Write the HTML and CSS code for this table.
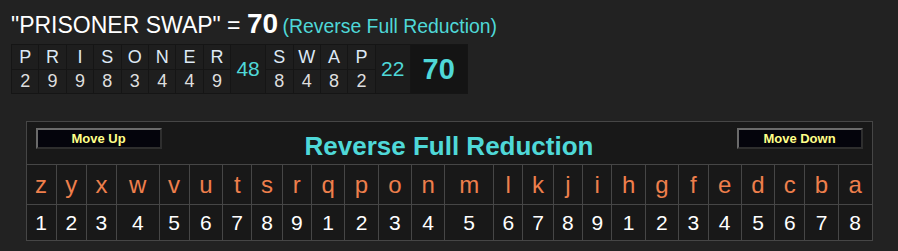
FILE: index.html
```html
<!DOCTYPE html>
<html>
<head>
<meta charset="utf-8">
<link rel="stylesheet" href="styles.css">
</head>
<body>
<div class="headline">
  <span class="phrase">"PRISONER SWAP" = </span><span class="val">70</span> <span class="cipher">(Reverse Full Reduction)</span>
</div>
<table class="word">
  <tr>
    <td class="l">P</td><td class="l">R</td><td class="l">I</td><td class="l">S</td><td class="l">O</td><td class="l">N</td><td class="l">E</td><td class="l">R</td>
    <td class="sum" rowspan="2">48</td>
    <td class="l">S</td><td class="l">W</td><td class="l">A</td><td class="l">P</td>
    <td class="sum" rowspan="2">22</td>
    <td class="total" rowspan="2">70</td>
  </tr>
  <tr>
    <td class="n">2</td><td class="n">9</td><td class="n">9</td><td class="n">8</td><td class="n">3</td><td class="n">4</td><td class="n">4</td><td class="n">9</td>
    <td class="n">8</td><td class="n">4</td><td class="n">8</td><td class="n">2</td>
  </tr>
</table>
<div class="panelwrap">
<table class="chart">
  <tr>
    <td class="head" colspan="26">
      <div class="headbar">
        <button class="btn">Move Up</button>
        <span class="title">Reverse Full Reduction</span>
        <button class="btn">Move Down</button>
      </div>
    </td>
  </tr>
  <tr class="letters">
    <td>z</td><td>y</td><td>x</td><td>w</td><td>v</td><td>u</td><td>t</td><td>s</td><td>r</td><td>q</td><td>p</td><td>o</td><td>n</td><td>m</td><td>l</td><td>k</td><td>j</td><td>i</td><td>h</td><td>g</td><td>f</td><td>e</td><td>d</td><td>c</td><td>b</td><td>a</td>
  </tr>
  <tr class="nums">
    <td>1</td><td>2</td><td>3</td><td>4</td><td>5</td><td>6</td><td>7</td><td>8</td><td>9</td><td>1</td><td>2</td><td>3</td><td>4</td><td>5</td><td>6</td><td>7</td><td>8</td><td>9</td><td>1</td><td>2</td><td>3</td><td>4</td><td>5</td><td>6</td><td>7</td><td>8</td>
  </tr>
</table>
</div>
</body>
</html>
```
FILE: styles.css
```css
html, body {
  margin: 0;
  padding: 0;
  background: #222222;
  font-family: "Liberation Sans", Arial, sans-serif;
}

.headline {
  padding: 8px 0 0 11px;
  height: 28px;
  color: #ffffff;
  white-space: nowrap;
}

.phrase {
  font-size: 23px;
}

.val {
  font-size: 28px;
  font-weight: bold;
}

.cipher {
  font-size: 19.4px;
  color: #4fd8d8;
}

.word {
  margin: 8px 0 0 11px;
  border-collapse: separate;
  border-spacing: 1px;
  background: #151515;
}

.word td {
  padding: 0;
  text-align: center;
}

.word .l {
  width: 26.4px;
  height: 24px;
  background: #1e1e1e;
  color: #dde9f5;
  font-size: 18px;
}

.word .n {
  width: 26.4px;
  height: 23px;
  background: #1e1e1e;
  color: #dedede;
  font-size: 18px;
}

.word .sum {
  width: 34px;
  background: #1c1c1c;
  color: #4fd8d8;
  font-size: 21px;
}

.word .total {
  width: 56px;
  background: #141414;
  color: #4fd8d8;
  font-size: 29px;
  font-weight: bold;
}

.panelwrap {
  display: flex;
  justify-content: center;
  margin-top: 27px;
}

.chart {
  width: 847px;
  border-collapse: collapse;
  background: #181818;
  border: 1px solid #464646;
}

.chart td {
  border: 1px solid #464646;
  padding: 0;
  text-align: center;
}

.chart .head {
  height: 42px;
  vertical-align: top;
}

.headbar {
  display: flex;
  justify-content: space-between;
  align-items: flex-start;
  padding: 6px 9px 0 9px;
}

.btn {
  width: 126px;
  height: 21px;
  background: #04040c;
  color: #ffff88;
  font-family: "Liberation Sans", Arial, sans-serif;
  font-size: 13px;
  font-weight: bold;
  border: 2px solid;
  border-color: #6a6a6a #2e2e2e #2e2e2e #6a6a6a;
  padding: 0;
}

.title {
  color: #4fd8d8;
  font-size: 26px;
  font-weight: bold;
  margin-top: 3px;
}

.letters td {
  height: 39px;
  color: #ee7f4c;
  font-size: 24px;
}

.nums td {
  height: 35px;
  color: #ffffff;
  font-size: 21px;
}
```
